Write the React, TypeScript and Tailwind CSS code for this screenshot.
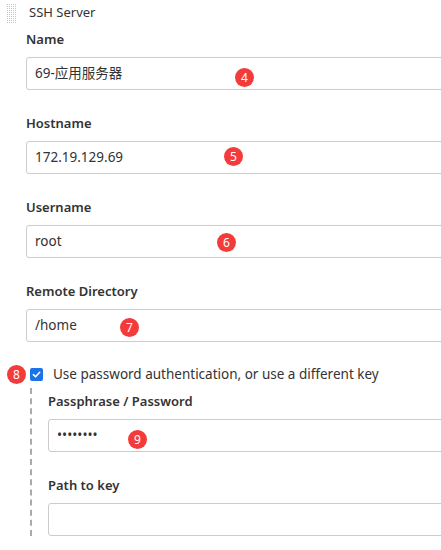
import React from "react";

const font = { fontFamily: '"Segoe UI", "Noto Sans", "Noto Sans CJK SC", sans-serif' };

function Badge({ n, className }: { n: number; className: string }) {
  return (
    <span className={`absolute flex h-[19px] w-[19px] items-center justify-center rounded-full bg-[#f43b3b] text-[12px] leading-none text-white ${className}`}>
      {n}
    </span>
  );
}

function Field({
  label,
  value,
  badge,
  badgeClass,
  gap = "mb-[23px]",
}: {
  label: string;
  value?: string;
  badge?: number;
  badgeClass?: string;
  gap?: string;
}) {
  return (
    <div className={gap}>
      <div className="mb-[8px] h-[20px] text-[13px] font-semibold leading-[20px] text-[#333]">{label}</div>
      <div className="relative flex h-[33px] w-[440px] items-center rounded-[3px] border border-[#ccc] bg-white px-[8px] text-[13.5px] text-[#333]">
        {value}
        {badge !== undefined && badgeClass && <Badge n={badge} className={badgeClass} />}
      </div>
    </div>
  );
}

export default function App() {
  return (
    <div className="relative h-[550px] w-[441px] overflow-hidden bg-white" style={font}>
      {/* Section header */}
      <div className="flex h-[29px] items-center pb-[3px]">
        <div className="ml-[7px] mr-[13px] grid grid-cols-5 gap-[1px]">
          {Array.from({ length: 50 }).map((_, i) => (
            <span key={i} className="h-[1px] w-[1px] bg-[#c4c4c4]" />
          ))}
        </div>
        <span className="text-[13px] text-[#333]">SSH Server</span>
      </div>

      <div className="px-[26px]">
        <Field label="Name" value="69-应用服务器" badge={4} badgeClass="left-[208px] top-[10px]" />
        <Field label="Hostname" value="172.19.129.69" badge={5} badgeClass="left-[197px] top-[5px]" />
        <Field label="Username" value="root" badge={6} badgeClass="left-[190px] top-[7px]" />
        <Field label="Remote Directory" value="/home" badge={7} badgeClass="left-[93px] top-[8px]" gap="mb-[22px]" />

        {/* checkbox row */}
        <div className="relative flex h-[20px] items-center">
          <Badge n={8} className="left-[-19px] top-[1px]" />
          <span className="ml-[4px] flex h-[13px] w-[13px] items-center justify-center rounded-[2px] bg-[#1a73e8]">
            <svg width="9" height="9" viewBox="0 0 10 10" fill="none">
              <path d="M1.5 5.2 L4 7.5 L8.5 2.5" stroke="white" strokeWidth="1.8" strokeLinecap="round" strokeLinejoin="round" />
            </svg>
          </span>
          <span className="ml-[10px] text-[13.5px] text-[#333]">Use password authentication, or use a different key</span>
        </div>

        {/* nested block */}
        <div className="ml-[4px] mt-[4px] border-l-2 border-dashed border-[#aaa] pl-[16px] pt-[3px]">
          <Field label="Passphrase / Password" value="••••••••" badge={9} badgeClass="left-[79px] top-[10px]" />
          <Field label="Path to key" />
        </div>
      </div>
    </div>
  );
}
